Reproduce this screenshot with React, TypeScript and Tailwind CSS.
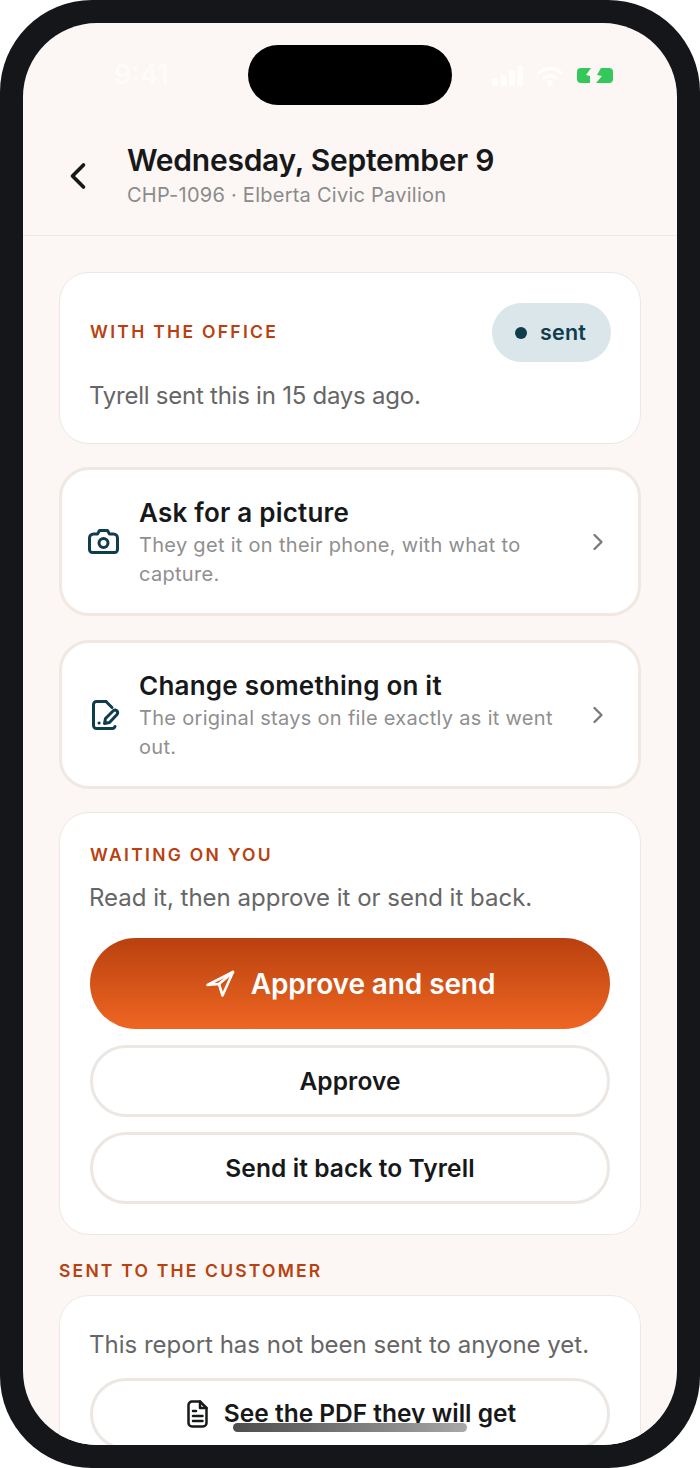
import { ChevronLeft, ChevronRight } from "lucide-react";

const CameraIcon = () => (
  <svg width="31" height="25" viewBox="0 0 31 25" fill="none" stroke="#0f3d4c" strokeWidth="3" strokeLinecap="round" strokeLinejoin="round">
    <path d="M9.500 5l1.500-2.500a1 1 0 0 1 1-1h7a1 1 0 0 1 1 1L21.500 5h4a4 4 0 0 1 4 4v11.500a3 3 0 0 1-3 3h-22a3 3 0 0 1-3-3V9a4 4 0 0 1 4-4z" />
    <circle cx="15.500" cy="14" r="4.500" />
  </svg>
);

const FileEditIcon = () => (
  <svg width="32" height="34" viewBox="0 0 32 34" fill="none" stroke="#0f3d4c" strokeWidth="3" strokeLinecap="round" strokeLinejoin="round">
    <path d="M17 3.500H7.500a3 3 0 0 0-3 3v21a3 3 0 0 0 3 3H23a3 3 0 0 0 3-2" />
    <path d="M17 3.500l6 6" />
    <path d="M10 25h.2" />
    <path d="M15.500 25.500l1-5L24 13a2.500 2.500 0 0 1 4 3.500l-7.500 8z" />
  </svg>
);

const PlaneIcon = () => (
  <svg width="30" height="28" viewBox="0 0 30 28" fill="none" stroke="white" strokeWidth="2.600" strokeLinecap="round" strokeLinejoin="round">
    <path d="M2.500 15L28 2 17.500 25.500 14 14z" />
    <path d="M14 14L28 2" />
  </svg>
);

const DocIcon = () => (
  <svg width="21" height="28" viewBox="0 0 21 28" fill="none" stroke="#17181a" strokeWidth="2.500" strokeLinecap="round" strokeLinejoin="round">
    <path d="M13 1.500H5a3.500 3.500 0 0 0-3.500 3.500v18A3.500 3.500 0 0 0 5 26.500h11a3.500 3.500 0 0 0 3.500-3.500V8z" />
    <path d="M13 1.500V8h6.500" />
    <path d="M6 11h3M6 16h9.500M6 21h9.500" />
  </svg>
);

const ActionRow = ({ icon, title, text }: { icon: React.ReactNode; title: string; text: string }) => (
  <div className="flex h-[149px] items-center rounded-[30px] border-[3px] border-[#f0e8e2] bg-white pl-[26px] pr-[26px]">
    <div className="flex w-[51px] shrink-0 justify-start">{icon}</div>
    <div className="flex-1 pt-[3px]">
      <div className="text-[26px] leading-[32px] font-semibold tracking-[0.22px] text-[#17181a]">{title}</div>
      <div className="mt-[2px] w-[425px] text-[20px] leading-[29px] tracking-[0.3px] text-[#8f8f8f]">{text}</div>
    </div>
    <ChevronRight size={28} strokeWidth={2} className="text-[#77797b]" />
  </div>
);

const OutlineButton = ({ children, className = "" }: { children: React.ReactNode; className?: string }) => (
  <div className={`flex h-[72px] items-center justify-center rounded-full border-[3px] border-[#ece7e2] bg-white text-[24.500px] font-semibold tracking-[0.1px] text-[#17181a] ${className}`}>
    {children}
  </div>
);

export default function App() {
  return (
    <div className="h-[1468px] w-[700px] bg-white font-['Inter','Noto_Sans',sans-serif]">
      <div className="h-full w-full rounded-[92px] bg-[#14161a] p-[23px]">
        <div className="relative flex h-full flex-col overflow-hidden rounded-[74px] bg-[#fcf7f4]">
          {/* Status bar */}
          <div className="flex h-[105px] shrink-0 items-center justify-between pl-[91px] pr-[64px]">
            <span className="text-[27px] font-semibold text-[#fefcfa]">9:41</span>
            <div className="flex items-center gap-[14px]">
              <svg width="31" height="20" viewBox="0 0 31 20" fill="#fffefd">
                <rect x="0" y="13" width="6" height="7" rx="1.500" />
                <rect x="8.500" y="9" width="6" height="11" rx="1.500" />
                <rect x="17" y="4.500" width="6" height="15.500" rx="1.500" />
                <rect x="25.500" y="0" width="5.500" height="20" rx="1.500" />
              </svg>
              <svg width="26" height="20" viewBox="0 0 26 20" fill="none" stroke="#fffefd" strokeWidth="3.200" strokeLinecap="round">
                <path d="M2 7c6.500-6 15.500-6 22 0" />
                <path d="M7 12c3.500-3 8.500-3 12 0" />
                <circle cx="13" cy="17" r="1.200" fill="#fffefd" />
              </svg>
              <svg width="36" height="15" viewBox="0 0 36 15" fill="#34c759">
                <path d="M4 0H14L9 7l4 1v7H4a4 4 0 0 1-4-4V4a4 4 0 0 1 4-4z" />
                <path d="M24 0H32a4 4 0 0 1 4 4v7a4 4 0 0 1-4 4H19L25 8l-5-1z" />
              </svg>
            </div>
          </div>
          <div className="absolute left-[225px] top-[22px] h-[60px] w-[204px] rounded-full bg-black" />

          {/* Header */}
          <div className="flex h-[108px] shrink-0 items-start border-b border-[#efe9e5] pl-[33px] pt-[13px]">
            <ChevronLeft size={44} strokeWidth={2} className="mr-[27px] mt-[13px] shrink-0 text-[#17181a]" />
            <div>
              <div className="text-[30px] leading-[38px] font-semibold tracking-[-0.25px] text-[#17181a]">Wednesday, September 9</div>
              <div className="mt-[2px] text-[20px] leading-[28px] tracking-[0.25px] text-[#8b8b8b]">CHP-1096 · Elberta Civic Pavilion</div>
            </div>
          </div>

          {/* Content */}
          <div className="flex flex-col px-[36px] pt-[36px]">
            <div className="h-[172px] rounded-[30px] border border-[#eee8e3] bg-white pl-[30px] pr-[29px] pt-[30px]">
              <div className="flex items-center justify-between">
                <span className="text-[17.500px] font-semibold tracking-[2.300px] text-[#b9410f]">WITH THE OFFICE</span>
                <span className="flex h-[59px] w-[119px] items-center justify-center gap-[13px] rounded-full bg-[#dae6ea] pr-[2px] text-[21.500px] font-semibold tracking-[0.2px] text-[#0f3d4c]">
                  <span className="h-[12px] w-[12px] rounded-full bg-[#0f3d4c]" />
                  sent
                </span>
              </div>
              <div className="ml-[-1px] mt-[18px] text-[24px] leading-[32px] tracking-[-0.24px] text-[#666666]">Tyrell sent this in 15 days ago.</div>
            </div>

            <div className="mt-[23px]">
              <ActionRow icon={<CameraIcon />} title="Ask for a picture" text="They get it on their phone, with what to capture." />
            </div>
            <div className="mt-[24px]">
              <ActionRow
                icon={<span className="ml-[1px]"><FileEditIcon /></span>}
                title="Change something on it"
                text="The original stays on file exactly as it went out."
              />
            </div>

            <div className="mt-[23px] h-[423px] rounded-[30px] border border-[#eee8e3] bg-white px-[30px] pt-[30px]">
              <div className="text-[17.500px] leading-[24px] font-semibold tracking-[2.300px] text-[#b9410f]">WAITING ON YOU</div>
              <div className="ml-[-1px] mt-[15px] text-[24px] leading-[32px] tracking-[0px] text-[#666666]">Read it, then approve it or send it back.</div>
              <div className="mt-[24px] flex h-[91px] items-center justify-center gap-[16px] rounded-full bg-gradient-to-b from-[#b9410f] to-[#ef6622] text-[28px] font-semibold tracking-[-0.1px] text-white">
                <PlaneIcon />
                Approve and send
              </div>
              <OutlineButton className="mt-[16px]">Approve</OutlineButton>
              <OutlineButton className="mt-[15px]">Send it back to Tyrell</OutlineButton>
            </div>

            <div className="mt-[24px] text-[17.500px] leading-[24px] font-semibold tracking-[2.200px] text-[#b9410f]">SENT TO THE CUSTOMER</div>
            <div className="mt-[12px] h-[200px] rounded-[30px] border border-[#eee8e3] bg-white px-[30px] pt-[33px]">
              <div className="ml-[-1px] text-[24px] leading-[32px] tracking-[0px] text-[#666666]">This report has not been sent to anyone yet.</div>
              <OutlineButton className="mt-[17px] gap-[16px] pb-[1px] pl-[3px] tracking-[0px]">
                <DocIcon />
                See the PDF they will get
              </OutlineButton>
            </div>
          </div>

          {/* Home indicator */}
          <div className="absolute bottom-[13px] left-[210px] h-[9px] w-[234px] rounded-full bg-gradient-to-r from-[#4d4d4d] to-[#a8a8a8]" />
        </div>
      </div>
    </div>
  );
}
